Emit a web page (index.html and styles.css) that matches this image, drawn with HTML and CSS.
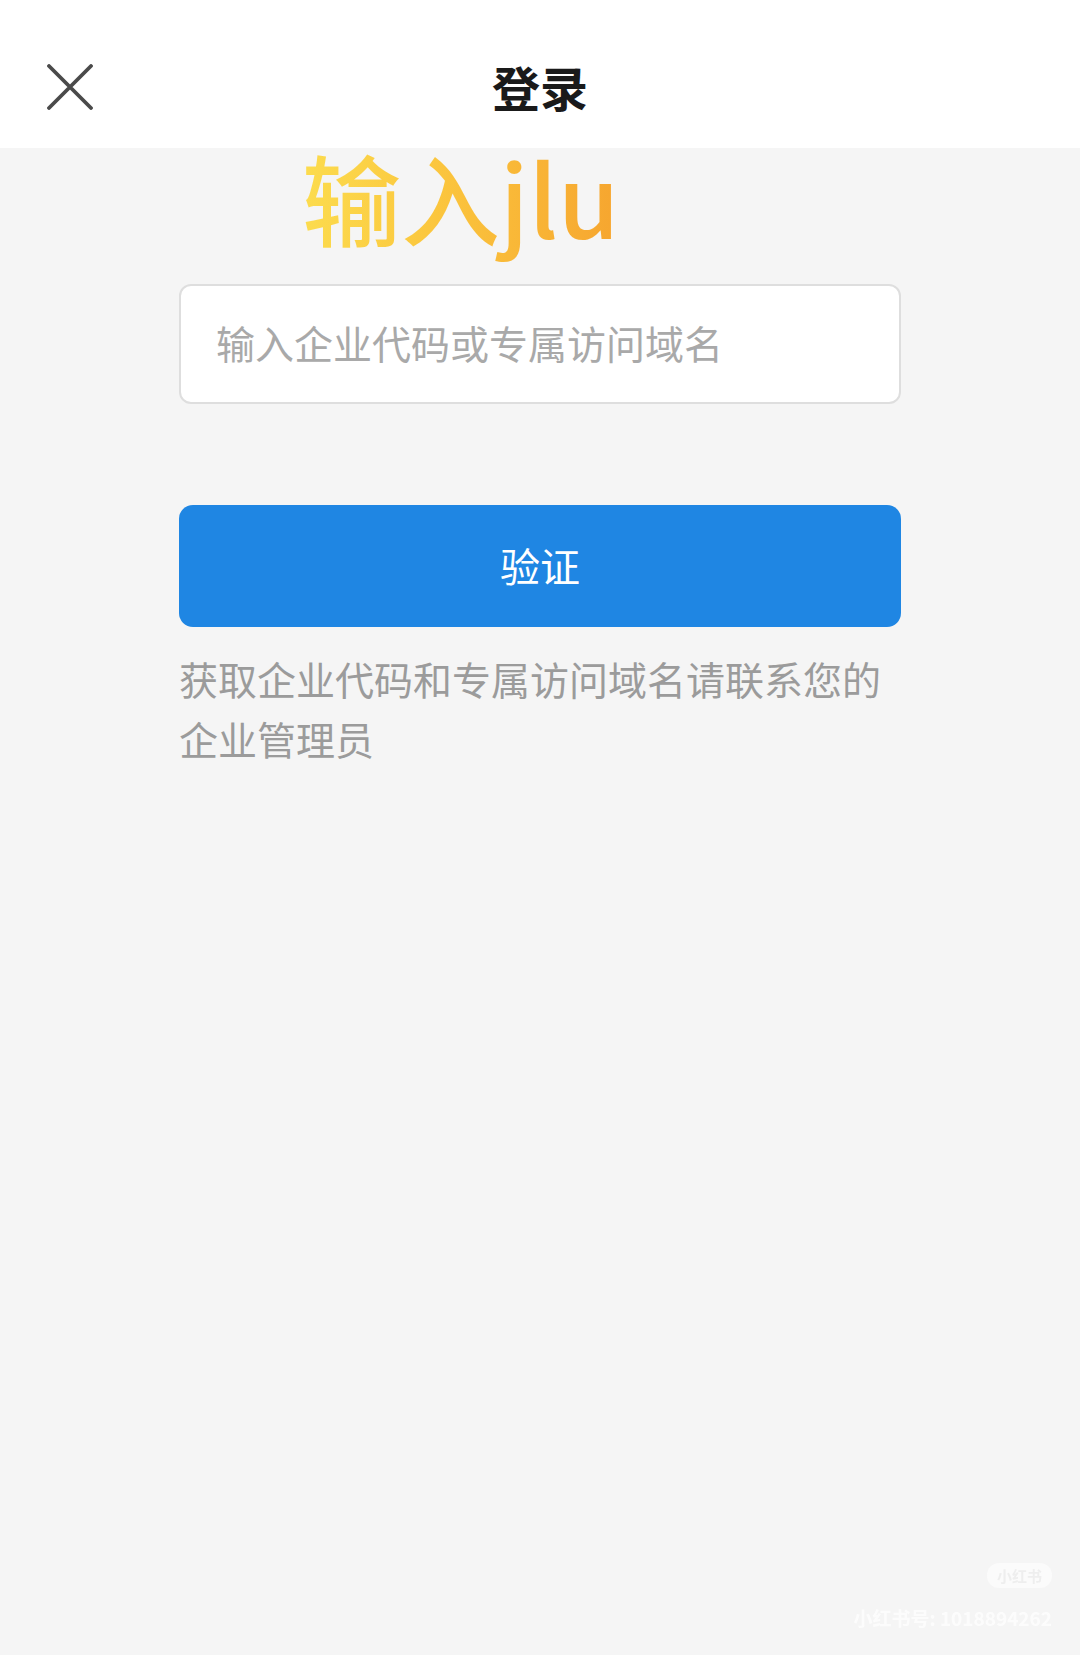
FILE: index.html
```html
<!DOCTYPE html>
<html lang="zh-CN">
<head>
    <meta charset="UTF-8">
    <meta name="viewport" content="width=device-width, initial-scale=1.0">
    <title>登录</title>
    <link rel="stylesheet" href="styles.css">
</head>
<body>
    <div class="header">
        <div class="close">
            <svg width="46" height="46" viewBox="0 0 46 46">
                <path d="M2 2 L44 44 M44 2 L2 44" stroke="#4a4a4a" stroke-width="3.8" stroke-linecap="round" fill="none"/>
            </svg>
        </div>
        <h1>登录</h1>
        <div></div>
    </div>

    <div class="sticker">输入jlu</div>

    <div class="container">
        <div class="field">输入企业代码或专属访问域名</div>
        <button class="verify">验证</button>
        <p class="hint">获取企业代码和专属访问域名请联系您的企业管理员</p>
    </div>

    <div class="watermark">
        <span class="wm-badge">小红书</span>
        <span class="wm-id">小红书号: 1018894262</span>
    </div>
</body>
</html>
```

FILE: styles.css
```css
body {
    margin: 0;
    width: 1080px;
    height: 1655px;
    background-color: #f5f5f5;
    font-family: "Noto Sans CJK SC", "Noto Sans", sans-serif;
    position: relative;
    overflow: hidden;
}
.header {
    background-color: #fff;
    height: 148px;
    box-sizing: border-box;
    padding: 62px 0 0 47px;
    display: grid;
    grid-template-columns: 1fr auto 1fr;
    align-items: start;
}
.close {
    width: 46px;
    height: 46px;
    margin-top: 2px;
}
.close svg {
    display: block;
}
h1 {
    margin: 0;
    font-size: 48px;
    font-weight: 700;
    line-height: 48px;
    color: #1a1a1a;
    margin-left: -47px;
}
.sticker {
    position: absolute;
    left: 302px;
    top: 128px;
    font-size: 99px;
    font-weight: 500;
    line-height: 136px;
    background: linear-gradient(90deg, #fcdc4e 0%, #fbc63e 42%, #f6a52f 100%);
    -webkit-background-clip: text;
    background-clip: text;
    color: transparent;
}
.container {
    width: 722px;
    margin: 0 auto;
    padding-top: 136px;
}
.field {
    height: 120px;
    box-sizing: border-box;
    background-color: #fff;
    border: 2px solid #dedede;
    border-radius: 12px;
    padding-left: 35px;
    padding-bottom: 4px;
    display: flex;
    align-items: center;
    font-size: 39px;
    color: #a9a9a9;
}
.verify {
    display: block;
    width: 100%;
    height: 122px;
    margin-top: 101px;
    background-color: #1f86e3;
    color: #fff;
    border: none;
    border-radius: 14px;
    font-family: inherit;
    font-size: 40px;
    padding-bottom: 4px;
    cursor: pointer;
}
.hint {
    margin: 21px 0 0;
    font-size: 39px;
    line-height: 60px;
    color: #9b9b9b;
}
.watermark {
    position: absolute;
    right: 28px;
    bottom: 24px;
    display: flex;
    flex-direction: column;
    align-items: flex-end;
    gap: 16px;
    color: #fff;
    opacity: 0.75;
}
.wm-badge {
    font-size: 15px;
    font-weight: 700;
    padding: 2px 10px;
    border-radius: 12px;
    background-color: rgba(255,255,255,0.8);
    color: #ececec;
}
.wm-id {
    font-size: 19px;
    font-weight: 700;
}
```
